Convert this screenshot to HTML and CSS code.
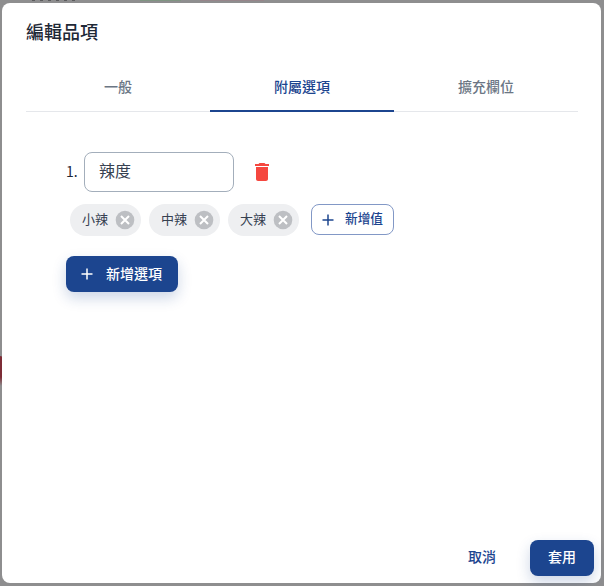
FILE: index.html
```html
<!DOCTYPE html>
<html lang="zh-Hant">
<head>
<meta charset="utf-8">
<title>編輯品項</title>
<link rel="stylesheet" href="styles.css">
</head>
<body>
<div class="backdrop-mark mark-red"></div>
<div class="backdrop-mark mark-top"></div>
<div class="backdrop-mark mark-green"></div>
<div class="backdrop-mark mark-rose"></div>
<section class="dialog">
  <h1 class="title">編輯品項</h1>
  <nav class="tabs">
    <div class="tab">一般</div>
    <div class="tab active">附屬選項</div>
    <div class="tab">擴充欄位</div>
  </nav>
  <div class="content">
    <div class="option-row">
      <span class="index">1.</span>
      <div class="field">辣度</div>
      <svg class="trash" viewBox="0 0 24 24" width="24" height="24"><path fill="#f5473f" d="M6 19c0 1.100.9 2 2 2h8c1.100 0 2-.9 2-2V7H6v12zM19 4h-3.500l-1-1h-5l-1 1H5v2h14V4z"/></svg>
    </div>
    <div class="chips">
      <div class="chip"><span class="label">小辣</span><svg class="chip-x" viewBox="0 0 20 20" width="20" height="20"><circle cx="10" cy="10" r="9.300" fill="#bdbfc3"/><path d="M6 6l8 8M14 6l-8 8" stroke="#fff" stroke-width="2" fill="none"/></svg></div>
      <div class="chip"><span class="label">中辣</span><svg class="chip-x" viewBox="0 0 20 20" width="20" height="20"><circle cx="10" cy="10" r="9.300" fill="#bdbfc3"/><path d="M6 6l8 8M14 6l-8 8" stroke="#fff" stroke-width="2" fill="none"/></svg></div>
      <div class="chip"><span class="label">大辣</span><svg class="chip-x" viewBox="0 0 20 20" width="20" height="20"><circle cx="10" cy="10" r="9.300" fill="#bdbfc3"/><path d="M6 6l8 8M14 6l-8 8" stroke="#fff" stroke-width="2" fill="none"/></svg></div>
      <button class="add-value"><svg viewBox="0 0 12 12" width="12" height="12"><path d="M6 .5v11M.5 6h11" stroke="#1c458f" stroke-width="1.500" fill="none"/></svg><span class="label">新增值</span></button>
    </div>
    <button class="add-option"><svg viewBox="0 0 12 12" width="12" height="12"><path d="M6 .5v11M.5 6h11" stroke="#fff" stroke-width="1.500" fill="none"/></svg><span class="label-sm">新增選項</span></button>
  </div>
  <footer class="actions">
    <button class="cancel"><span class="label">取消</span></button>
    <button class="apply"><span class="label">套用</span></button>
  </footer>
</section>
</body>
</html>
```
FILE: styles.css
```css
* { box-sizing: border-box; }
html, body { height: 100%; }
body {
  margin: 0;
  background: #8e8e8f;
  font-family: "Noto Sans CJK TC", Inter, "Noto Sans", sans-serif;
  padding: 3px 3px 3px 2px;
  overflow: hidden;
  position: relative;
}
.backdrop-mark { position: absolute; }
.mark-red { left: 0; top: 356px; width: 3px; height: 30px; background: linear-gradient(#7d2c36 70%, #8e8e8f); border-radius: 0 3px 3px 0; }
.mark-top { left: 32px; top: 0; width: 46px; height: 1px; background: repeating-linear-gradient(90deg, #5c5c5e 0 3px, #8e8e8f 3px 8px); }
.mark-green { left: 140px; top: 0; width: 41px; height: 1px; background: #7f9482; }
.mark-rose { left: 200px; top: 0; width: 64px; height: 1px; background: #96858a; }
.dialog {
  position: relative;
  height: 580px;
  width: 599px;
  background: #fff;
  border-radius: 8px;
  padding: 0 23px 0 24px;
  display: flex;
  flex-direction: column;
}
.title {
  margin: 16px 0 0;
  font-size: 18px;
  line-height: 24px;
  font-weight: 500;
  color: #1f2937;
}
.tabs {
  display: flex;
  margin-top: 23px;
  border-bottom: 1px solid #e5e7eb;
  height: 46px;
}
.tab {
  flex: 1;
  text-align: center;
  font-size: 14px;
  font-weight: 500;
  line-height: 40px;
  color: #6b7684;
}
.tab.active {
  color: #1c458f;
  border-bottom: 2px solid #1c458f;
  height: 46px;
}
.content {
  flex: 1;
  padding: 40px 0 0 40px;
}
.option-row {
  display: flex;
  align-items: center;
  height: 40px;
}
.index { width: 18px; font-size: 14px; color: #1f2937; padding-bottom: 2px; }
.field {
  width: 150px;
  height: 40px;
  border: 1px solid #a3aebb;
  border-radius: 8px;
  padding: 0 14px;
  font-size: 16px;
  line-height: 35px;
  color: #374151;
}
.trash { margin-left: 16px; }
.chips {
  display: flex;
  align-items: flex-start;
  gap: 8px;
  margin: 12px 0 0 4px;
}
.label { display: block; padding-bottom: 4px; }
.label-sm { padding-bottom: 2px; }
.chip {
  display: flex;
  align-items: center;
  height: 32px;
  width: 71px;
  padding: 0 6px 0 12px;
  border-radius: 16px;
  background: #eeeff1;
  font-size: 13px;
  color: #374151;
  justify-content: space-between;
}
.add-value {
  display: flex;
  align-items: center;
  gap: 11px;
  width: 83px;
  height: 31px;
  margin-left: 4px;
  padding: 0 0 0 10px;
  background: #fff;
  border: 1px solid #8298c6;
  border-radius: 8px;
  font: 500 12.700px "Noto Sans CJK TC", Inter, sans-serif;
  color: #1c458f;
}
.add-option {
  display: flex;
  align-items: center;
  gap: 13px;
  width: 112px;
  height: 36px;
  margin-top: 20px;
  padding: 0 0 0 15px;
  background: #1c458f;
  border: 0;
  border-radius: 8px;
  color: #fff;
  font: 500 14px "Noto Sans CJK TC", Inter, sans-serif;
  box-shadow: 0 6px 14px rgba(28, 69, 143, .22);
}
.actions {
  display: flex;
  justify-content: flex-end;
  align-items: center;
  gap: 26px;
  margin-right: -16px;
  padding-bottom: 7px;
}
.cancel, .apply {
  height: 36px;
  border: 0;
  padding: 0;
  border-radius: 8px;
  font: 500 14px "Noto Sans CJK TC", Inter, sans-serif;
}
.cancel { width: 44px; background: transparent; color: #1c458f; }
.apply { width: 64px; background: #1c458f; color: #fff; box-shadow: 0 6px 14px rgba(28, 69, 143, .22); }
```
